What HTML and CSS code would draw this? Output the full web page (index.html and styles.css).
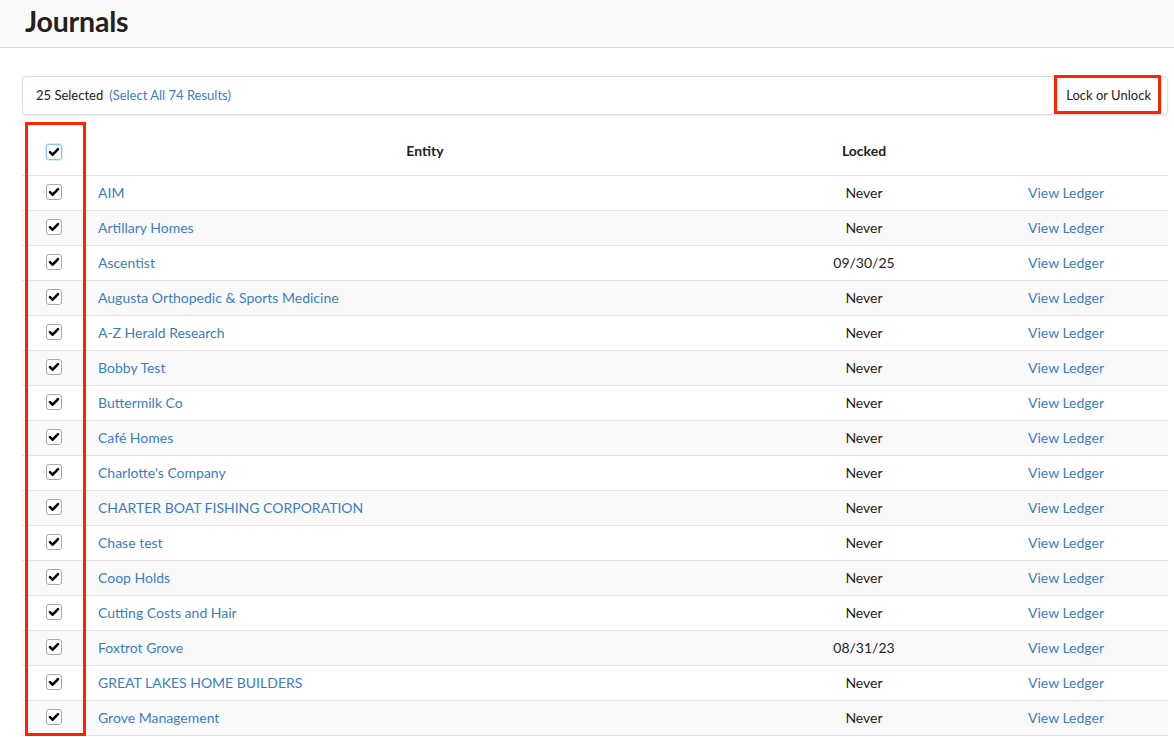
FILE: index.html
```html
<!DOCTYPE html>
<html>
<head>
<meta charset="utf-8">
<link rel="stylesheet" href="styles.css">
</head>
<body>
<header class="page-header"><h1 class="title">Journals</h1></header>
<main class="content">
  <div class="select-bar">
    <div class="select-info"><span class="count">25 Selected</span><a class="select-all">(Select All 74 Results)</a></div>
    <button class="lock-btn">Lock or Unlock</button>
  </div>
  <div class="table-wrap">
    <div class="col-highlight"></div>
    <table class="journals">
      <thead>
        <tr>
          <th class="c-check"><span class="cb cb-focus"><svg viewBox="0 0 16 16"><path d="M3.4 8.2 L6.5 11.1 L12.6 4.7" /></svg></span></th>
          <th class="c-entity">Entity</th>
          <th class="c-locked">Locked</th>
          <th class="c-action"></th>
        </tr>
      </thead>
      <tbody id="rows"></tbody>
    </table>
  </div>
</main>
<script src="app.js"></script>
</body>
</html>
```
FILE: app.js
```js
const data = [
  ["AIM","Never"],["Artillary Homes","Never"],["Ascentist","09/30/25"],
  ["Augusta Orthopedic & Sports Medicine","Never"],["A-Z Herald Research","Never"],
  ["Bobby Test","Never"],["Buttermilk Co","Never"],["Café Homes","Never"],
  ["Charlotte's Company","Never"],["CHARTER BOAT FISHING CORPORATION","Never"],
  ["Chase test","Never"],["Coop Holds","Never"],["Cutting Costs and Hair","Never"],
  ["Foxtrot Grove","08/31/23"],["GREAT LAKES HOME BUILDERS","Never"],["Grove Management","Never"]
];
const tb = document.getElementById("rows");
const check = '<span class="cb"><svg viewBox="0 0 16 16"><path d="M3.4 8.2 L6.5 11.1 L12.6 4.7" /></svg></span>';
for (const [name, locked] of data) {
  const tr = document.createElement("tr");
  tr.innerHTML = '<td class="c-check">' + check + '</td><td class="c-entity"><a class="link"></a></td><td class="c-locked"></td><td class="c-action"><a class="link">View Ledger</a></td>';
  tr.querySelector(".c-entity a").textContent = name;
  tr.querySelector(".c-locked").textContent = locked;
  tb.appendChild(tr);
}
```
FILE: styles.css
```css
* { box-sizing: border-box; }
html, body { margin: 0; padding: 0; background: #fff; }
body { font-family: Lato, "Open Sans", Arial, sans-serif; color: #222; font-size: 14px; }
.page-header {
  height: 48px;
  background: #fafafa;
  border-bottom: 1px solid #d9d9d9;
  padding: 0 25px;
}
.title { margin: 0; font-size: 28.5px; font-weight: 700; line-height: 43px; color: #222; letter-spacing: -0.2px; }
.content { padding: 28px 6px 0 22px; }
.select-bar {
  height: 39px;
  border: 1px solid #dedede;
  border-radius: 4px;
  box-shadow: 0 1px 2px rgba(0,0,0,0.08);
  display: flex;
  align-items: center;
  justify-content: space-between;
  padding-left: 13px;
  padding-right: 6px;
}
.select-info { font-size: 13px; display: flex; gap: 6px; position: relative; top: -1px; }
.count { color: #222; }
.select-all { color: #3b7dc4; }
.lock-btn {
  position: relative;
  font-family: inherit;
  font-size: 13px;
  color: #222;
  background: transparent;
  border: 0;
  padding: 0 10px 0 11px;
  height: 36px;
  top: -1px;
}
.lock-btn::after {
  content: "";
  position: absolute;
  left: -1px; right: 0; top: -2px; bottom: -1px;
  border: 3px solid #ff2200;
}
.table-wrap { position: relative; margin-top: 12px; }
.col-highlight {
  position: absolute;
  left: 3px; top: -5px;
  width: 61px; height: 614px;
  border: 3px solid #ff2200;
  pointer-events: none;
  z-index: 2;
}
.journals { width: 100%; border-collapse: collapse; table-layout: fixed; }
.journals th { height: 48px; font-weight: 700; font-size: 14px; text-align: center; border-bottom: 1px solid #e3e3e3; padding: 0; }
.journals td { height: 35px; border-bottom: 1px solid #e3e3e3; padding: 0; font-size: 14px; }
.journals tbody tr:nth-child(even) td { background: #f9f9f9; }
.c-check { width: 64px; text-align: center; }
.c-entity { width: 678px; }
td.c-entity { padding-left: 12px !important; }
.c-locked { width: 200px; text-align: center; }
.c-action { text-align: center; }
.link { color: #3b7dc4; }
.cb {
  display: inline-block;
  width: 16px; height: 16px;
  border: 1px solid #a9a9a9;
  border-radius: 3px;
  background: #fff;
  vertical-align: middle;
  position: relative;
  top: -2px;
}
th .cb { top: 0; }
.cb-focus { border-color: #8fc3e6; box-shadow: 0 0 0 1px rgba(143,195,230,0.35); }
.cb svg { width: 14px; height: 14px; display: block; }
.cb path { fill: none; stroke: #000; stroke-width: 2.9; stroke-linecap: round; stroke-linejoin: round; }
```
